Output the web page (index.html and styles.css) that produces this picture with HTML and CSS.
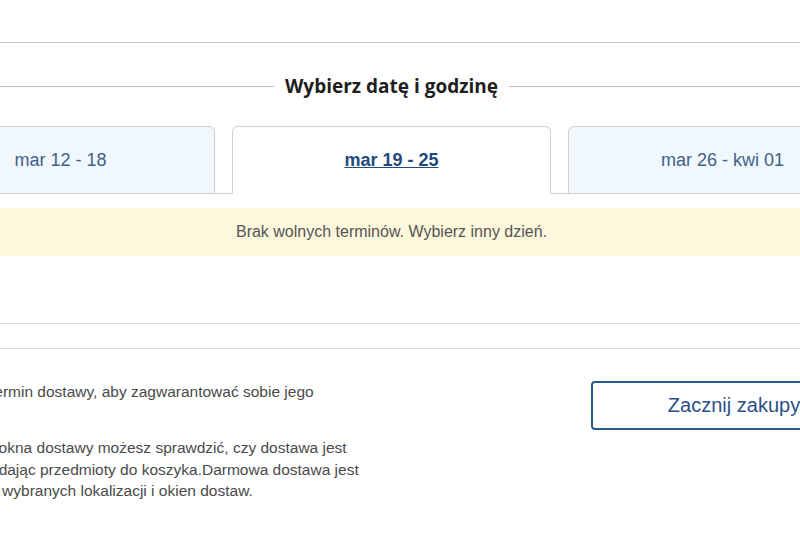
FILE: index.html
```html
<!DOCTYPE html>
<html lang="pl">
<head>
    <meta charset="utf-8">
    <title>Termin dostawy</title>
    <link rel="stylesheet" href="styles.css">
</head>
<body>
    <div class="page">
        <div class="top-rule"></div>

        <div class="slot-title">
            <span class="slot-title-line"></span>
            <h2>Wybierz datę i godzinę</h2>
            <span class="slot-title-line"></span>
        </div>

        <div class="week-tabs">
            <div class="week-tab">mar 12 - 18</div>
            <div class="week-tab active"><a href="#">mar 19 - 25</a></div>
            <div class="week-tab">mar 26 - kwi 01</div>
        </div>

        <div class="slot-notice">Brak wolnych terminów. Wybierz inny dzień.</div>

        <div class="slot-divider"></div>

        <div class="slot-footer">
            <div class="slot-info">
                <p>Zarezerwuj termin dostawy, aby zagwarantować sobie jego dostępność.</p>
                <p>Po wybraniu okna dostawy możesz sprawdzić, czy dostawa jest dostępna, dodając przedmioty do koszyka.Darmowa dostawa jest dostępna dla wybranych lokalizacji i okien dostaw.</p>
            </div>
            <button class="start-button">Zacznij zakupy</button>
        </div>
    </div>
</body>
</html>
```

FILE: styles.css
```css
body {
    margin: 0;
    overflow: hidden;
    background: white;
    font-family: "Liberation Sans", Arial, sans-serif;
}
.page {
    width: 971px;
    margin-left: -94px;
}
.top-rule {
    height: 42px;
    border-bottom: 1px solid #c6c6c6;
}
.slot-title {
    display: flex;
    align-items: center;
    gap: 11px;
    margin-top: 31px;
}
.slot-title h2 {
    margin: 0;
    font-family: "Open Sans", Lato, sans-serif;
    font-size: 19px;
    font-weight: 700;
    line-height: 24px;
    color: #1e1e1e;
}
.slot-title-line {
    flex: 1;
    border-top: 1px solid #bdbdbd;
}
.week-tabs {
    display: flex;
    gap: 17px;
    margin-top: 28px;
    border-bottom: 1px solid #cfcfcf;
}
.week-tab {
    width: 309px;
    height: 66px;
    margin-bottom: -1px;
    display: flex;
    align-items: center;
    justify-content: center;
    background: #f0f7fd;
    border: 1px solid #cfcfcf;
    border-radius: 6px 6px 0 0;
    font-size: 18px;
    color: #3e6189;
    cursor: pointer;
}
.week-tab.active {
    width: 319px;
    background: white;
    border-bottom-color: white;
}
.week-tab.active a {
    color: #1f4a7d;
    font-weight: 700;
    text-decoration: underline;
}
.slot-notice {
    margin-top: 14px;
    height: 48px;
    display: flex;
    align-items: center;
    justify-content: center;
    background: #fdf7dc;
    font-size: 16px;
    color: #555;
}
.slot-divider {
    margin-top: 67px;
    height: 24px;
    border-top: 1px solid #dedede;
    border-bottom: 1px solid #dedede;
}
.slot-footer {
    display: flex;
    justify-content: space-between;
    align-items: flex-start;
    padding: 32px 0 0 3px;
}
.slot-info {
    width: 485px;
    font-size: 15.5px;
    line-height: 21.5px;
    color: #4a4a4a;
}
.slot-info p {
    margin: 0 0 13px;
}
.start-button {
    width: 286px;
    height: 49px;
    background: white;
    border: 2px solid #2d5b8f;
    border-radius: 4px;
    font-family: "Liberation Sans", Arial, sans-serif;
    font-size: 20px;
    color: #2b5088;
    cursor: pointer;
}
```
